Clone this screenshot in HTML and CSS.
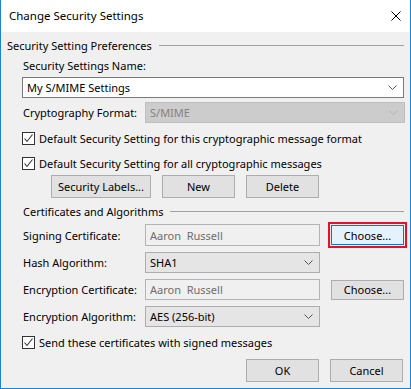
FILE: index.html
```html
<!DOCTYPE html>
<html lang="en">
<head>
    <meta charset="UTF-8">
    <title>Change Security Settings</title>
    <link rel="stylesheet" href="styles.css">
</head>
<body>
    <div class="window">
        <div class="titlebar">
            <span class="title">Change Security Settings</span>
            <svg class="close" width="10" height="10" viewBox="0 0 10 10">
                <path d="M0.5 0.5 L9.5 9.5 M9.5 0.5 L0.5 9.5" stroke="#000" stroke-width="1"/>
            </svg>
        </div>

        <div class="content">
            <div class="group-head first">
                <span>Security Setting Preferences</span>
                <div class="rule"></div>
            </div>

            <div class="section">
                <div class="caption">Security Settings Name:</div>
                <div class="combo editable">
                    <span>My S/MIME Settings</span>
                    <svg class="chev" width="9" height="5" viewBox="0 0 9 5"><path d="M0.5 0.5 L4.5 4.5 L8.5 0.5" fill="none" stroke="#555"/></svg>
                </div>

                <div class="row crypto-row">
                    <span class="row-label">Cryptography Format:</span>
                    <div class="combo disabled wide">
                        <span>S/MIME</span>
                        <svg class="chev" width="9" height="5" viewBox="0 0 9 5"><path d="M0.5 0.5 L4.5 4.5 L8.5 0.5" fill="none" stroke="#b5b5b5"/></svg>
                    </div>
                </div>

                <label class="check check-1">
                    <span class="box"><svg width="11" height="11" viewBox="0 0 11 11"><path d="M1.5 5.5 L4 8.5 L9.5 1.5" fill="none" stroke="#333" stroke-width="1.1"/></svg></span>
                    Default Security Setting for this cryptographic message format
                </label>
                <label class="check check-2">
                    <span class="box"><svg width="11" height="11" viewBox="0 0 11 11"><path d="M1.5 5.5 L4 8.5 L9.5 1.5" fill="none" stroke="#333" stroke-width="1.1"/></svg></span>
                    Default Security Setting for all cryptographic messages
                </label>

                <div class="btn-row pref-buttons">
                    <button class="btn labels-btn">Security Labels...</button>
                    <button class="btn">New</button>
                    <button class="btn">Delete</button>
                </div>
            </div>

            <div class="group-head second">
                <span>Certificates and Algorithms</span>
                <div class="rule"></div>
            </div>

            <div class="section">
                <div class="row signing-row">
                    <span class="row-label">Signing Certificate:</span>
                    <div class="textbox">Aaron&nbsp; Russell</div>
                    <button class="btn choose focused">Choose...</button>
                </div>
                <div class="row algo-row">
                    <span class="row-label">Hash Algorithm:</span>
                    <div class="combo dropdown">
                        <span>SHA1</span>
                        <svg class="chev" width="9" height="5" viewBox="0 0 9 5"><path d="M0.5 0.5 L4.5 4.5 L8.5 0.5" fill="none" stroke="#555"/></svg>
                    </div>
                </div>
                <div class="row algo-row">
                    <span class="row-label">Encryption Certificate:</span>
                    <div class="textbox">Aaron&nbsp; Russell</div>
                    <button class="btn choose">Choose...</button>
                </div>
                <div class="row algo-row">
                    <span class="row-label">Encryption Algorithm:</span>
                    <div class="combo dropdown">
                        <span>AES (256-bit)</span>
                        <svg class="chev" width="9" height="5" viewBox="0 0 9 5"><path d="M0.5 0.5 L4.5 4.5 L8.5 0.5" fill="none" stroke="#555"/></svg>
                    </div>
                </div>

                <label class="check check-3">
                    <span class="box"><svg width="11" height="11" viewBox="0 0 11 11"><path d="M1.5 5.5 L4 8.5 L9.5 1.5" fill="none" stroke="#333" stroke-width="1.1"/></svg></span>
                    Send these certificates with signed messages
                </label>

                <div class="btn-row footer">
                    <button class="btn">OK</button>
                    <button class="btn">Cancel</button>
                </div>
            </div>
        </div>
    </div>
</body>
</html>
```

FILE: styles.css
```css
body {
    margin: 0;
    font-family: "Noto Sans", "Open Sans", sans-serif;
    font-size: 11px;
    color: #000;
    background: #f0f0f0;
}

.window {
    width: 411px;
    height: 389px;
    box-sizing: border-box;
    border: 1px solid #1883d7;
    border-top: none;
    background: #f0f0f0;
    white-space: nowrap;
}

.titlebar {
    height: 31px;
    background: #fff;
    display: flex;
    align-items: center;
    justify-content: space-between;
    padding: 0 9px 1px 8px;
}

.title {
    font-size: 11.5px;
}

.close {
    display: block;
    margin-top: 1px;
}

.content {
    padding: 0 6px 0 6px;
}

.group-head {
    height: 16px;
    line-height: 16px;
    display: flex;
    align-items: center;
}

.group-head.first {
    margin-top: 6px;
}

.group-head.second {
    margin-top: 6px;
    padding-left: 16px;
}

.group-head .rule {
    flex: 1;
    height: 0;
    border-top: 1px solid #a0a0a0;
    margin-left: 7px;
    margin-top: -2px;
}

.section {
    padding-left: 15px;
}

.caption {
    height: 16px;
    line-height: 16px;
    margin-top: 4px;
    padding-left: 1px;
}

.combo,
.textbox {
    box-sizing: border-box;
    height: 21px;
    display: flex;
    align-items: center;
    justify-content: space-between;
    padding: 0 6px 0 4px;
    border: 1px solid #7a7a7a;
    background: #fff;
    flex-shrink: 0;
}

.combo.editable {
    margin-top: 3px;
}

.combo.disabled {
    background: #cccccc;
    border-color: #bfbfbf;
    color: #838383;
}

.combo.wide {
    width: 260px;
}

.combo.dropdown {
    width: 175px;
    background: #e5e5e5;
    border-color: #adadad;
}

.textbox {
    width: 175px;
    background: #f0f0f0;
    border-color: #b4b4b4;
    color: #6d6d6d;
}

.row {
    display: flex;
    align-items: center;
    height: 21px;
}

.row-label {
    width: 122px;
    flex-shrink: 0;
    padding-left: 1px;
}

.crypto-row {
    margin-top: 4px;
}

.signing-row {
    margin-top: 4px;
    height: 22px;
}

.signing-row .textbox {
    height: 22px;
}

.algo-row {
    margin-top: 6px;
}

.check {
    display: flex;
    align-items: center;
    height: 16px;
    gap: 4px;
}

.check .box {
    box-sizing: border-box;
    width: 13px;
    height: 13px;
    border: 1px solid #333;
    background: #fff;
    display: flex;
}

.check-1 {
    margin-top: 7px;
}

.check-2 {
    margin-top: 9px;
}

.check-3 {
    margin-top: 7px;
}

.btn-row {
    display: flex;
    gap: 11px;
    height: 23px;
}

.pref-buttons {
    margin-top: 4px;
    padding-left: 29px;
}

.footer {
    margin-top: 9px;
    padding-left: 224px;
}

.btn {
    box-sizing: border-box;
    width: 73px;
    height: 23px;
    padding: 0;
    font-family: inherit;
    font-size: 11px;
    color: #000;
    background: #e1e1e1;
    border: 1px solid #adadad;
    flex-shrink: 0;
}

.labels-btn {
    width: 100px;
}

.choose {
    height: 20px;
    margin-left: 11px;
}

.choose.focused {
    background: #e5f1fb;
    border-color: #0078d7;
    outline: 2px solid #e81123;
    outline-offset: 1px;
}
```
